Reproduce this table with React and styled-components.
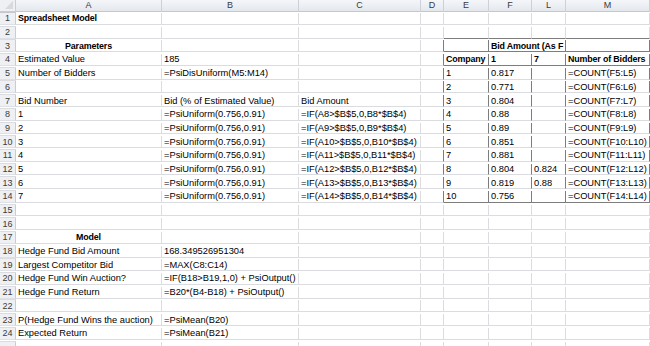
import styled, { createGlobalStyle } from 'styled-components';

const GlobalStyle = createGlobalStyle`
  html, body {
    margin: 0;
    padding: 0;
    background: #fff;
  }
  body {
    font-family: "Liberation Sans", Arial, sans-serif;
  }
`;

const COLS = ['A', 'B', 'C', 'D', 'E', 'F', 'L', 'M'];
const TEMPLATE = '16px 146px 137px 122px 23px 45px 43px 34px 84px';
const GRID = '#dadcdf';
const FRAME = '#7d7d7d';

const Sheet = styled.div`
  width: 650px;
  height: 346px;
  overflow: hidden;
  font-size: 9.3px;
  color: #000;
`;

const Row = styled.div`
  display: grid;
  grid-template-columns: ${TEMPLATE};
  height: ${(p) => p.$h}px;
`;

const Corner = styled.div`
  position: relative;
  background: #eef0f3;
  border-right: 1px solid #c9cdd3;
  border-bottom: 1px solid #c9cdd3;
  box-sizing: border-box;
  &::after {
    content: '';
    position: absolute;
    right: 2px;
    bottom: 2px;
    border-left: 8px solid transparent;
    border-bottom: 8px solid #d6d9de;
  }
`;

const ColHead = styled.div`
  background: linear-gradient(#f4f6f9, #e4e8ed);
  border-right: 1px solid #cdd1d7;
  border-bottom: 1px solid #c4c8ce;
  box-sizing: border-box;
  color: #3b3b3b;
  display: flex;
  align-items: center;
  justify-content: center;
  font-size: 9px;
`;

const RowHead = styled.div`
  background: #eef0f3;
  border-right: 1px solid #c9cdd3;
  border-bottom: 1px solid #dde0e4;
  box-sizing: border-box;
  color: #3b3b3b;
  display: flex;
  align-items: center;
  justify-content: center;
  font-size: 9px;
`;

const Cell = styled.div`
  grid-column: span ${(p) => p.$span || 1};
  border-right: 1px solid ${(p) => (p.$rDark ? FRAME : GRID)};
  border-bottom: 1px solid ${(p) => (p.$bDark ? FRAME : GRID)};
  box-sizing: border-box;
  padding: 0 2px;
  display: flex;
  align-items: center;
  justify-content: ${(p) => (p.$center ? 'center' : 'flex-start')};
  font-weight: ${(p) => (p.$bold ? 700 : 400)};
  font-size: ${(p) => (p.$bold ? '8.9px' : 'inherit')};
  letter-spacing: ${(p) => (p.$bold ? '-0.15px' : 'normal')};
  white-space: nowrap;
  overflow: hidden;
`;

const Fill = styled.div`
  border-bottom: 1px solid ${GRID};
  box-sizing: border-box;
`;

// cells: [A, B, C, D, E, F, L, M]
const rows = {
  1: { A: { t: 'Spreadsheet Model', b: true } },
  3: {
    A: { t: 'Parameters', b: true, c: true },
    F: { t: 'Bid Amount (As F', b: true, span: 2 },
  },
  4: {
    A: { t: 'Estimated Value' },
    B: { t: '185' },
    E: { t: 'Company', b: true },
    F: { t: '1', b: true },
    L: { t: '7', b: true },
    M: { t: 'Number of Bidders', b: true },
  },
  5: { A: { t: 'Number of Bidders' }, B: { t: '=PsiDisUniform(M5:M14)' } },
  7: {
    A: { t: 'Bid Number' },
    B: { t: 'Bid (% of Estimated Value)' },
    C: { t: 'Bid Amount' },
  },
  17: { A: { t: 'Model', b: true, c: true } },
  18: { A: { t: 'Hedge Fund Bid Amount' }, B: { t: '168.349526951304' } },
  19: { A: { t: 'Largest Competitor Bid' }, B: { t: '=MAX(C8:C14)' } },
  20: {
    A: { t: 'Hedge Fund Win Auction?' },
    B: { t: '=IF(B18>B19,1,0) + PsiOutput()' },
  },
  21: { A: { t: 'Hedge Fund Return' }, B: { t: '=B20*(B4-B18) + PsiOutput()' } },
  23: { A: { t: 'P(Hedge Fund Wins the auction)' }, B: { t: '=PsiMean(B20)' } },
  24: { A: { t: 'Expected Return' }, B: { t: '=PsiMean(B21)' } },
};

const bids = [0.817, 0.771, 0.804, 0.88, 0.89, 0.851, 0.881, 0.804, 0.819, 0.756];
const lastBids = { 8: '0.824', 9: '0.88' };

bids.forEach((bid, i) => {
  const r = i + 5;
  const company = i + 1;
  rows[r] = rows[r] || {};
  rows[r].E = { t: String(company) };
  rows[r].F = { t: String(bid) };
  if (lastBids[company]) rows[r].L = { t: lastBids[company] };
  rows[r].M = { t: `=COUNT(F${r}:L${r})` };
});

for (let n = 1; n <= 7; n++) {
  const r = n + 7;
  rows[r] = rows[r] || {};
  rows[r].A = { t: String(n) };
  rows[r].B = { t: '=PsiUniform(0.756,0.91)' };
  rows[r].C = { t: `=IF(A${r}>$B$5,0,B${r}*$B$4)` };
}

const inFrame = (r, c) => r >= 3 && r <= 14 && c >= 3;

function SheetRow({ r, label = true }) {
  const data = rows[r] || {};
  const cells = [];
  for (let c = 0; c < COLS.length; c++) {
    const key = COLS[c];
    const cell = data[key] || {};
    const span = cell.span || 1;
    const last = c + span - 1;
    cells.push(
      <Cell
        key={key}
        $span={span}
        $bold={cell.b}
        $center={cell.c}
        $rDark={inFrame(r, last)}
        $bDark={c >= 4 && (r === 2 || r === 3 || r === 4 || r === 14)}
      >
        {cell.t}
      </Cell>
    );
    c = last;
  }
  return (
    <Row $h={13.7}>
      <RowHead>{label ? r : null}</RowHead>
      {cells}
      <Fill />
    </Row>
  );
}

export default function App() {
  const nums = Array.from({ length: 24 }, (_, i) => i + 1);
  return (
    <Sheet>
      <GlobalStyle />
      <Row $h={13}>
        <Corner />
        {COLS.map((c) => (
          <ColHead key={c}>{c}</ColHead>
        ))}
        <ColHead />
      </Row>
      {nums.map((r) => (
        <SheetRow key={r} r={r} />
      ))}
      {/* row 25 only peeks in at the bottom edge */}
      <SheetRow r={25} label={false} />
    </Sheet>
  );
}
